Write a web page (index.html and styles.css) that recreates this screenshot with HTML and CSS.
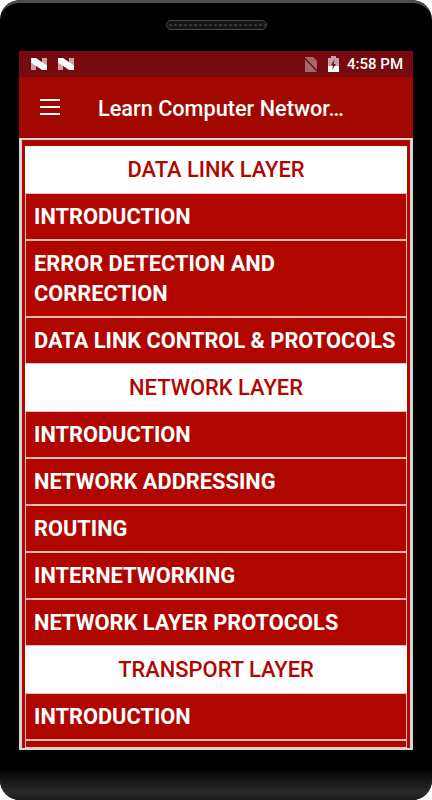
FILE: index.html
```html
<!DOCTYPE html>
<html lang="en">
<head>
  <meta charset="UTF-8">
  <meta name="viewport" content="width=device-width, initial-scale=1.0">
  <title>Learn Computer Networks</title>
  <link rel="stylesheet" href="styles.css">
</head>
<body>
  <div class="phone">
    <div class="bezel-top">
      <div class="speaker"></div>
    </div>

    <div class="screen">
      <!-- Status bar -->
      <div class="status-bar">
        <svg class="n-icon" viewBox="0 0 16 12"><path class="dim" d="M0 1h5v11H0zM11 0h5v11h-5z"/><path d="M0 0h5l11 7.5V12h-5L0 4.5z"/></svg>
        <svg class="n-icon" viewBox="0 0 16 12"><path class="dim" d="M0 1h5v11H0zM11 0h5v11h-5z"/><path d="M0 0h5l11 7.5V12h-5L0 4.5z"/></svg>
        <span class="status-space"></span>
        <svg class="sim-icon" viewBox="0 0 14 15"><path class="dim" d="M1 0h8l4 4v11H1z"/><path class="cut" d="M0 .5l13.5 14" /></svg>
        <svg class="battery-icon" viewBox="0 0 11 16"><path class="dim" d="M3 2V0h5v2h3v8H0V2z"/><path d="M0 10h11v6H0z"/><path class="bolt" d="M6.5 3L3 9.5h2.2L4 14l4-6H5.8z"/></svg>
        <span class="clock">4:58 PM</span>
      </div>

      <!-- App bar -->
      <header class="app-bar">
        <svg class="menu-icon" viewBox="0 0 20 16"><path d="M0 0h20v2H0zM0 7h20v2H0zM0 14h20v2H0z"/></svg>
        <h1>Learn Computer Networ…</h1>
      </header>

      <!-- Lista de topicos -->
      <div class="content">
        <div class="topics">
          <div class="topic-head">DATA LINK LAYER</div>
          <div class="topic">INTRODUCTION</div>
          <div class="topic">ERROR DETECTION AND<br>CORRECTION</div>
          <div class="topic">DATA LINK CONTROL &amp; PROTOCOLS</div>
          <div class="topic-head">NETWORK LAYER</div>
          <div class="topic">INTRODUCTION</div>
          <div class="topic">NETWORK ADDRESSING</div>
          <div class="topic">ROUTING</div>
          <div class="topic">INTERNETWORKING</div>
          <div class="topic">NETWORK LAYER PROTOCOLS</div>
          <div class="topic-head">TRANSPORT LAYER</div>
          <div class="topic">INTRODUCTION</div>
          <div class="topic topic-cut"></div>
        </div>
      </div>
    </div>

    <div class="bezel-bottom"></div>
  </div>
</body>
</html>
```

FILE: styles.css
```css
body {
  font-family: Roboto, Arial, sans-serif;
  margin: 0;
  padding: 0;
  background-color: #fff;
}
.phone {
  width: 432px;
  height: 800px;
  overflow: hidden;
  display: flex;
  flex-direction: column;
  background-color: #000;
  border-radius: 20px;
}
.bezel-top {
  height: 51px;
  flex: none;
  box-sizing: border-box;
  padding-top: 17px;
  border-top: 3px solid #4e4e4e;
  border-radius: 20px 20px 0 0;
  display: flex;
  justify-content: center;
  align-items: flex-start;
}
.speaker {
  width: 101px;
  height: 10px;
  box-sizing: border-box;
  border: 1px solid #484848;
  border-radius: 5px;
  background-color: #151515;
  background-image: radial-gradient(circle, #3a3a3a 1px, transparent 1.5px);
  background-size: 5px 8px;
  background-position: 1px 0;
}
.screen {
  margin: 0 19px;
  height: 699px;
  flex: none;
  display: flex;
  flex-direction: column;
  overflow: hidden;
}
.status-bar {
  height: 26px;
  flex: none;
  display: flex;
  align-items: center;
  padding: 0 10px 0 12px;
  background-color: #760a0e;
  color: #fff;
}
.n-icon {
  width: 16px;
  height: 12px;
  margin-right: 11px;
  fill: #fff;
}
.n-icon .dim {
  fill: #c9a0a2;
}
.status-space {
  flex: 1;
}
.sim-icon {
  width: 14px;
  height: 15px;
  margin-right: 10px;
}
.sim-icon .dim {
  fill: #a8686b;
}
.sim-icon .cut {
  stroke: #5e0508;
  stroke-width: 1.2;
}
.battery-icon {
  width: 11px;
  height: 16px;
  margin-right: 8px;
  fill: #fff;
}
.battery-icon .dim {
  fill: #c9a0a2;
}
.battery-icon .bolt {
  fill: #760a0e;
}
.clock {
  font-size: 15px;
  font-weight: 500;
}
.app-bar {
  height: 61px;
  flex: none;
  display: flex;
  align-items: center;
  padding: 0 0 0 21px;
  box-sizing: border-box;
  background-color: #a30800;
  color: #fff;
}
.menu-icon {
  width: 20px;
  height: 16px;
  fill: #fff;
  margin-right: 38px;
  margin-top: -1px;
}
.app-bar h1 {
  margin: 2px 0 0;
  font-size: 21.7px;
  font-weight: 500;
}
.content {
  flex: 1;
  min-height: 0;
  overflow: hidden;
  border: solid #d6d6d6;
  border-width: 2px 3px;
  box-sizing: border-box;
  background-color: #b00600;
  padding: 6px 3px 0;
}
.topics {
  height: 100%;
  overflow: hidden;
  border-bottom: 1px solid #eccbca;
  box-sizing: border-box;
}
.topic-head {
  background-color: #fff;
  color: #b00600;
  text-align: center;
  font-size: 21.9px;
  font-weight: 500;
  height: 47px;
  line-height: 47px;
}
.topic {
  background-color: #b00600;
  color: #fff;
  border: 1px solid #e6bdbb;
  font-size: 21.8px;
  font-weight: 700;
  line-height: 30px;
  padding: 8px 8px 7px;
}
.topic-cut {
  height: 30px;
}
.bezel-bottom {
  flex: 1;
  margin-top: 18px;
  background: linear-gradient(#000, #2a2a2a 75%, #1c1c1c);
}
```
